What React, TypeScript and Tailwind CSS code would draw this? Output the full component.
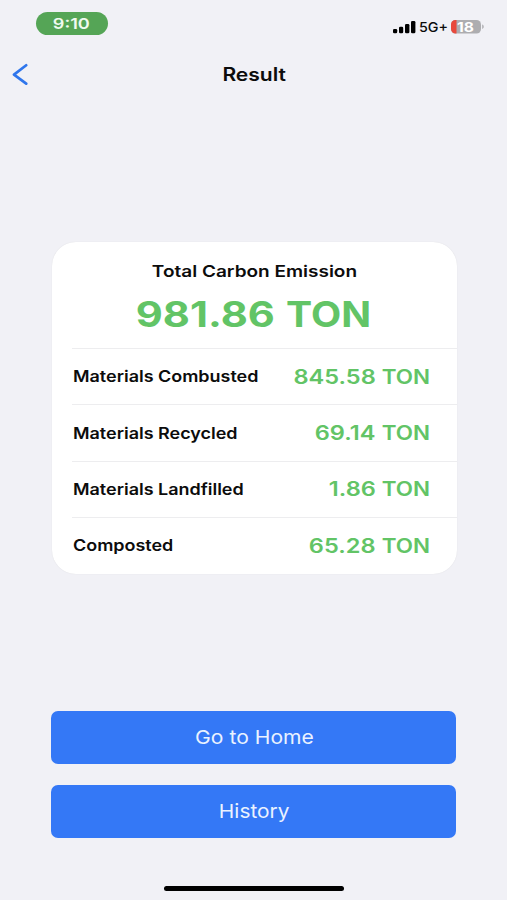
const materials = [
  { name: "Materials Combusted", value: "845.58" },
  { name: "Materials Recycled", value: "69.14" },
  { name: "Materials Landfilled", value: "1.86" },
  { name: "Composted", value: "65.28" },
];

const StatusBar = () => (
  <div className="flex h-12 items-start justify-between pl-9 pr-6 pt-3">
    <div className="flex h-[23px] w-[72px] items-center justify-center rounded-full bg-[#55a556] pt-[1px] pr-[1px] text-[15px] font-semibold text-[#f0faef]">
      <span className="inline-block scale-x-[1.21]">9:10</span>
    </div>
    <div className="flex items-center pt-2">
      <svg width="23" height="13" viewBox="0 0 23 13" fill="#000">
        <rect x="0" y="8" width="4.2" height="4.2" rx="1.3" />
        <rect x="6" y="5.8" width="4.2" height="6.4" rx="1.3" />
        <rect x="12" y="3" width="4.4" height="9.2" rx="1.3" />
        <rect x="18" y="0" width="4.4" height="12.2" rx="1.3" />
      </svg>
      <span className="ml-[3px] inline-block w-[30px] origin-left scale-x-[1.06] text-[13.5px] leading-[14px] font-medium">5G+</span>
      <div className="relative ml-[2px] h-[14px] w-[32px]">
        <svg className="absolute inset-0" width="33" height="14" viewBox="0 0 33 14">
          <rect width="30" height="13.5" rx="4.5" fill="#adadb0" />
          <path d="M5.5 0H4.5A4.5 4.5 0 0 0 0 4.5v4.5A4.5 4.5 0 0 0 4.5 13.5h1z" fill="#e8493d" />
          <path d="M31.2 4.6c2 .6 2 3.8 0 4.4z" fill="#adadb0" />
        </svg>
        <span className="relative block w-[29px] scale-x-[1.2] text-center text-[13px] leading-[14px] font-bold text-white">18</span>
      </div>
    </div>
  </div>
);

const Header = () => (
  <header className="grid h-[52px] grid-cols-3 items-center">
    <button aria-label="Back" className="ml-3 w-4">
      <svg width="16" height="22" viewBox="0 0 16 22" fill="none" stroke="#2f76ec" strokeWidth="2.7" strokeLinecap="round" strokeLinejoin="round">
        <path d="M14.2 2.2 2 11.6 14.2 20.6" />
      </svg>
    </button>
    <h1 className="pl-[1px] text-center text-[18px] font-semibold">
      <span className="inline-block scale-x-[1.17]">Result</span>
    </h1>
  </header>
);

const ResultCard = () => (
  <section className="mt-[142px] ml-[51.5px] h-[332px] w-[405px] overflow-hidden rounded-[24px] bg-white shadow-[0_0_1px_#d8d8dc]">
    <div className="ml-5 h-[106px] pr-5 pt-[17px] text-center">
      <h2 className="text-base leading-6 font-semibold">
        <span className="inline-block scale-x-[1.187]">Total Carbon Emission</span>
      </h2>
      <p className="mt-[10px] flex justify-center gap-[11px] pl-[7px] text-[35px] leading-[42px] font-bold text-[#62c466]">
        <span className="inline-block origin-right scale-x-[1.19]">981.86</span>
        <span className="inline-block w-[71px] origin-left scale-x-[1.12] text-left">TON</span>
      </p>
    </div>
    {materials.map((item) => (
      <div key={item.name} className="ml-5 flex h-[56.4px] items-center justify-between border-t border-[#ededef] pl-[1px] pr-[27px]">
        <span className="inline-block origin-left scale-x-[1.122] pb-[1px] text-base font-semibold whitespace-nowrap">{item.name}</span>
        <span className="flex text-[20px] font-semibold text-[#62c466]">
          <span className="inline-block origin-right scale-x-[1.18]">{item.value}</span>
          <span className="inline-block w-[54px] origin-right scale-x-[1.12] text-right">TON</span>
        </span>
      </div>
    ))}
  </section>
);

const Actions = () => (
  <div className="mx-auto mt-[137px] flex w-[405px] flex-col gap-[21px]">
    <button className="h-[53px] rounded-[7px] bg-[#3478f6] pt-[2px] pl-[1px] text-[19px] text-[#eaf2ff]">
      <span className="inline-block scale-x-[1.11]">Go to Home</span>
    </button>
    <button className="h-[53px] rounded-[7px] bg-[#3478f6] pt-[2px] pl-[1px] text-[19px] text-[#eaf2ff]">
      <span className="inline-block scale-x-[1.1]">History</span>
    </button>
  </div>
);

export default function App() {
  return (
    <main className="flex h-[900px] w-[507px] flex-col overflow-hidden bg-[#f1f1f6] font-['Inter',sans-serif] text-[#0c0c0c]">
      <StatusBar />
      <Header />
      <ResultCard />
      <Actions />
      <div className="mx-auto mt-12 h-[5px] w-[180px] rounded-full bg-black" />
    </main>
  );
}
